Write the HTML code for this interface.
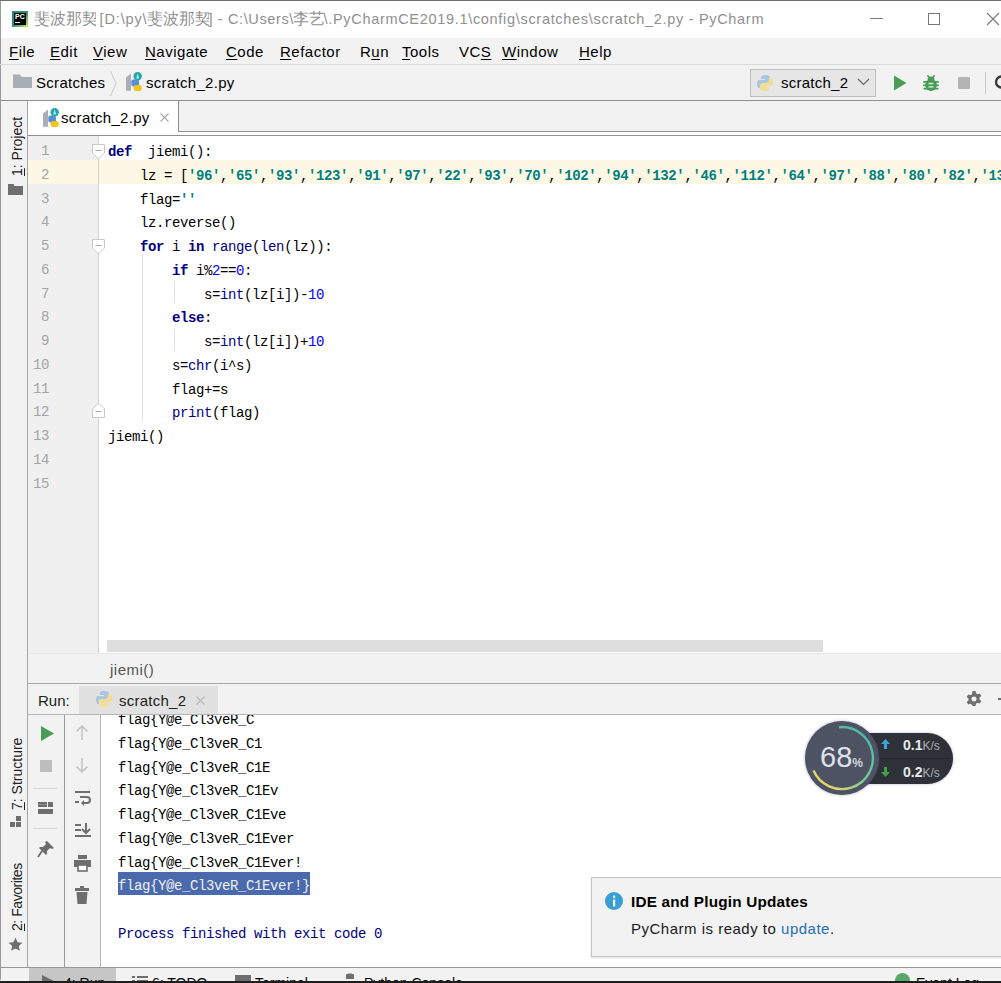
<!DOCTYPE html>
<html><head><meta charset="utf-8">
<style>
*{margin:0;padding:0;box-sizing:border-box}
html,body{width:1001px;height:983px;overflow:hidden;background:#f2f2f2;font-family:"Liberation Sans",sans-serif;position:relative}
.a{position:absolute}
.ui{font-family:"Liberation Sans",sans-serif;font-size:16px;color:#000;white-space:pre;line-height:1}
.mono{font-family:"Liberation Mono",monospace;font-size:14px;letter-spacing:-0.4px;white-space:pre;line-height:23.75px}
u{text-decoration:underline;text-decoration-thickness:1px;text-underline-offset:1.5px}
.kw{color:#000080;font-weight:bold}
.st{color:#008080;font-weight:bold}
.num{color:#0000ff}
.bi{color:#000080}
</style></head><body>
<!-- top dark line -->
<div class="a" style="left:0;top:0;width:1001px;height:1px;background:#6e6e6e"></div>
<!-- title bar -->
<div class="a" style="left:0;top:1px;width:1001px;height:37px;background:#fff"></div>
<div class="a" style="left:0;top:1px;width:1px;height:982px;background:#9a9a9a"></div>
<!-- PC logo -->
<div class="a" style="left:12px;top:11px;width:16px;height:16px;background:linear-gradient(135deg,#2e8a6a 0%,#2f8b80 50%,#d8e85a 100%)"></div>
<div class="a" style="left:14px;top:13px;width:12px;height:12px;background:#000"></div>
<div class="a" style="left:15px;top:13px;font:bold 7px 'Liberation Sans';color:#fff;line-height:8px">PC</div>
<div class="a" style="left:15px;top:22px;width:5px;height:1px;background:#fff"></div>
<div class="a ui" style="left:34px;top:11px;width:62px;overflow:hidden;color:#8f8f8f;font-size:15.5px">斐波那契</div>
<div class="a ui" style="left:99.5px;top:12px;color:#8f8f8f;font-size:14.5px;letter-spacing:0.87px">[D:\py\</div>
<div class="a ui" style="left:147px;top:11px;width:62px;overflow:hidden;color:#8f8f8f;font-size:15.5px">斐波那契</div>
<div class="a ui" style="left:208.5px;top:12px;color:#8f8f8f;font-size:14.5px;letter-spacing:0.63px">] - C:\Users\</div>
<div class="a ui" style="left:293px;top:11px;width:31px;overflow:hidden;color:#8f8f8f;font-size:15.5px">李艺</div>
<div class="a ui" style="left:323.5px;top:12px;color:#8f8f8f;font-size:14.5px;letter-spacing:0.69px">\.PyCharmCE2019.1\config\scratches\scratch_2.py - PyCharm</div>
<!-- window controls -->
<div class="a" style="left:870px;top:18px;width:13px;height:1px;background:#777"></div>
<div class="a" style="left:928px;top:13px;width:12px;height:12px;border:1px solid #777"></div>
<svg class="a" style="left:986px;top:12px" width="15" height="14"><path d="M1 1L13 13M13 1L1 13" stroke="#777" stroke-width="1.1" fill="none"/></svg>

<!-- menu bar -->
<div class="a" style="left:1px;top:38px;width:1000px;height:26px;background:#f2f2f2"></div>
<div class="a" style="left:0;top:64px;width:1001px;height:1px;background:#dadada"></div>
<div class="a ui" style="left:9px;top:44px;font-size:15px;letter-spacing:0.5px"><u>F</u>ile</div>
<div class="a ui" style="left:50px;top:44px;font-size:15px;letter-spacing:0.5px"><u>E</u>dit</div>
<div class="a ui" style="left:93px;top:44px;font-size:15px;letter-spacing:0.5px"><u>V</u>iew</div>
<div class="a ui" style="left:145px;top:44px;font-size:15px;letter-spacing:0.5px"><u>N</u>avigate</div>
<div class="a ui" style="left:226px;top:44px;font-size:15px;letter-spacing:0.5px"><u>C</u>ode</div>
<div class="a ui" style="left:280px;top:44px;font-size:15px;letter-spacing:0.5px"><u>R</u>efactor</div>
<div class="a ui" style="left:360px;top:44px;font-size:15px;letter-spacing:0.5px">R<u>u</u>n</div>
<div class="a ui" style="left:402px;top:44px;font-size:15px;letter-spacing:0.5px"><u>T</u>ools</div>
<div class="a ui" style="left:459px;top:44px;font-size:15px;letter-spacing:0.5px">VC<u>S</u></div>
<div class="a ui" style="left:502px;top:44px;font-size:15px;letter-spacing:0.5px"><u>W</u>indow</div>
<div class="a ui" style="left:579px;top:44px;font-size:15px;letter-spacing:0.5px"><u>H</u>elp</div>

<!-- nav bar content -->
<svg class="a" style="left:13px;top:74px" width="19" height="14"><path d="M0 1.5V14H19V3H8.5L7 0.5H0Z" fill="#a8aeb5"/></svg>
<div class="a ui" style="left:36px;top:75px;font-size:15px;letter-spacing:0.3px">Scratches</div>
<svg class="a" style="left:109px;top:70px" width="9" height="27"><path d="M1.5 1L7 13.5L1.5 26" stroke="#c8c8c8" stroke-width="1" fill="none"/></svg>
<svg class="a" style="left:125px;top:72px" width="19" height="19" viewBox="0 0 19 19"><path d="M1 5.5L6 1.5V18.8H1Z" fill="#a9aeb6"/><rect x="6.3" y="7.5" width="7.7" height="7" rx="2" fill="#5a8fd6"/><rect x="8.7" y="13" width="8" height="6" rx="2.5" fill="#f3c51c"/><circle cx="12.7" cy="4.2" r="4.2" fill="#2ba4a8"/><path d="M12.7 1.6L14.3 6.6H11.1Z" fill="#8ff3f0"/></svg>
<div class="a ui" style="left:146px;top:75px;font-size:15px;letter-spacing:0.3px">scratch_2.py</div>
<!-- run config combo -->
<div class="a" style="left:750px;top:69px;width:126px;height:28px;background:#e6e6e6;border:1px solid #bdbdbd"></div>
<svg class="a" style="left:756px;top:74px" width="18" height="18" viewBox="0 0 18 18"><path d="M9 1c-4 0-4 2-4 2v2h4v1H3S1 6 1 10s2 4 2 4h2v-2c0-2 2-3 3-3h4s2 0 2-2V3s0-2-5-2z" fill="#a9c6e4"/><path d="M9 17c4 0 4-2 4-2v-2H9v-1h6s2 0 2-4-2-4-2-4h-2v2c0 2-2 3-3 3H6s-2 0-2 2v4s0 2 5 2z" fill="#f3dd91"/></svg>
<div class="a ui" style="left:781px;top:75px;font-size:15px;letter-spacing:0.25px">scratch_2</div>
<svg class="a" style="left:857px;top:78px" width="13" height="8"><path d="M1 1L6.5 6.5L12 1" stroke="#666" stroke-width="1.2" fill="none"/></svg>
<svg class="a" style="left:893px;top:75px" width="14" height="16"><path d="M1 0.5L13.5 8L1 15.5Z" fill="#499c54"/></svg>
<svg class="a" style="left:922px;top:74px" width="18" height="18" viewBox="0 0 18 18"><g fill="#499c54"><path d="M5.5 1.2L7.2 3.6M12.5 1.2L10.8 3.6" stroke="#499c54" stroke-width="1.5"/><ellipse cx="9" cy="5" rx="3.4" ry="2.6"/><ellipse cx="9" cy="11" rx="5.8" ry="6"/><rect x="1" y="7" width="16" height="1.8" rx="0.9"/><rect x="1" y="10.4" width="16" height="1.8" rx="0.9"/><rect x="1.5" y="13.8" width="15" height="1.8" rx="0.9"/></g><rect x="6.5" y="8.8" width="5" height="1.5" fill="#cfe8cf"/><rect x="6.5" y="12.1" width="5" height="1.5" fill="#cfe8cf"/></svg>
<div class="a" style="left:958px;top:77px;width:12px;height:12px;background:#b4b4b4;border-radius:1px"></div>
<div class="a" style="left:985px;top:72px;width:1px;height:22px;background:#c8c8c8"></div>
<svg class="a" style="left:994px;top:75px" width="10" height="18"><circle cx="7.5" cy="7" r="5.5" stroke="#3a3a3a" stroke-width="2.4" fill="none"/></svg>
<!-- nav bar -->
<div class="a" style="left:0;top:100px;width:1001px;height:1px;background:#8f8f8f"></div>

<!-- left stripe -->
<div class="a" style="left:27px;top:101px;width:1px;height:866px;background:#a6a6a6"></div>

<!-- tab bar -->
<div class="a" style="left:28px;top:101px;width:973px;height:34px;background:#fff"></div>
<div class="a" style="left:178px;top:101px;width:823px;height:31px;background:#f2f2f2;border-left:1px solid #8f8f8f;border-bottom:1px solid #8f8f8f"></div>
<div class="a" style="left:28px;top:135px;width:973px;height:1px;background:#8f8f8f"></div>

<!-- editor -->
<div class="a" style="left:28px;top:136px;width:71px;height:518px;background:#f0f0f0"></div>
<div class="a" style="left:99px;top:136px;width:902px;height:518px;background:#fff"></div>
<div class="a" style="left:28px;top:160px;width:973px;height:24px;background:#fdf8e5"></div>
<div class="a" style="left:98px;top:136px;width:1px;height:518px;background:#d2d2d2"></div>


<!-- tab content -->
<svg class="a" style="left:42px;top:108px" width="19" height="19" viewBox="0 0 19 19"><path d="M1 5.5L6 1.5V18.8H1Z" fill="#a9aeb6"/><rect x="6.3" y="7.5" width="7.7" height="7" rx="2" fill="#5a8fd6"/><rect x="8.7" y="13" width="8" height="6" rx="2.5" fill="#f3c51c"/><circle cx="12.7" cy="4.2" r="4.2" fill="#2ba4a8"/><path d="M12.7 1.6L14.3 6.6H11.1Z" fill="#8ff3f0"/></svg>
<div class="a ui" style="left:61px;top:110px;font-size:15px;letter-spacing:0.3px">scratch_2.py</div>
<svg class="a" style="left:160px;top:113px" width="9" height="9"><path d="M0.5 0.5L8.5 8.5M8.5 0.5L0.5 8.5" stroke="#a8a8a8" stroke-width="1.1"/></svg>
<!-- indent guides -->
<div class="a" style="left:142px;top:254px;width:1px;height:168px;background:#e4e4e4"></div>
<div class="a" style="left:174px;top:281px;width:1px;height:22px;background:#e4e4e4"></div>
<div class="a" style="left:174px;top:329px;width:1px;height:22px;background:#e4e4e4"></div>
<!-- line numbers -->
<div class="a mono" style="left:28px;top:140px;width:21px;text-align:right;color:#a4a4a4">1
2
3
4
5
6
7
8
9
10
11
12
13
14
15</div>
<!-- fold markers -->
<svg class="a" style="left:92px;top:144px" width="13" height="16"><path d="M0.5 0.5H12.5V9L6.5 15L0.5 9Z" fill="#fff" stroke="#c8c8c8"/><path d="M3.5 6.5H9.5" stroke="#a8a8a8"/></svg>
<svg class="a" style="left:92px;top:239px" width="13" height="16"><path d="M0.5 0.5H12.5V9L6.5 15L0.5 9Z" fill="#fff" stroke="#c8c8c8"/><path d="M3.5 6.5H9.5" stroke="#a8a8a8"/></svg>
<svg class="a" style="left:92px;top:402px" width="13" height="16"><path d="M0.5 15.5H12.5V7L6.5 1L0.5 7Z" fill="#fff" stroke="#c8c8c8"/><path d="M3.5 9.5H9.5" stroke="#a8a8a8"/></svg>
<!-- code -->
<div class="a mono" style="left:108px;top:141px;color:#000"><span class="kw">def</span>  jiemi():
    lz = [<span class="st">'96'</span>,<span class="st">'65'</span>,<span class="st">'93'</span>,<span class="st">'123'</span>,<span class="st">'91'</span>,<span class="st">'97'</span>,<span class="st">'22'</span>,<span class="st">'93'</span>,<span class="st">'70'</span>,<span class="st">'102'</span>,<span class="st">'94'</span>,<span class="st">'132'</span>,<span class="st">'46'</span>,<span class="st">'112'</span>,<span class="st">'64'</span>,<span class="st">'97'</span>,<span class="st">'88'</span>,<span class="st">'80'</span>,<span class="st">'82'</span>,<span class="st">'137'</span>,<span class="st">'90'</span>]
    flag=<span class="st">''</span>
    lz.reverse()
    <span class="kw">for</span> i <span class="kw">in</span> <span class="bi">range</span>(<span class="bi">len</span>(lz)):
        <span class="kw">if</span> i%<span class="num">2</span>==<span class="num">0</span>:
            s=<span class="bi">int</span>(lz[i])-<span class="num">10</span>
        <span class="kw">else</span>:
            s=<span class="bi">int</span>(lz[i])+<span class="num">10</span>
        s=<span class="bi">chr</span>(i^s)
        flag+=s
        <span class="bi">print</span>(flag)
jiemi()</div>
<!-- h scrollbar -->
<div class="a" style="left:107px;top:640px;width:716px;height:12px;background:#dedede"></div>
<!-- breadcrumbs -->
<div class="a ui" style="left:110px;top:662px;color:#555;font-size:15px;letter-spacing:0.5px">jiemi()</div>
<!-- breadcrumb bar -->
<div class="a" style="left:28px;top:653px;width:973px;height:1px;background:#e8e8e8"></div>
<div class="a" style="left:28px;top:683px;width:973px;height:1px;background:#a9a9a9"></div>

<!-- run header -->
<div class="a" style="left:28px;top:714px;width:973px;height:1px;background:#b5b5b5"></div>
<!-- console -->
<div class="a" style="left:100px;top:715px;width:901px;height:252px;background:#fff"></div>
<div class="a" style="left:64px;top:715px;width:1px;height:252px;background:#9a9a9a"></div>
<div class="a" style="left:100px;top:715px;width:1px;height:252px;background:#b4b4b4"></div>

<!-- run header content -->
<div class="a" style="left:79px;top:686px;width:139px;height:28px;background:#e1e1e1"></div>
<div class="a ui" style="left:38px;top:693px;color:#222;font-size:15px">Run:</div>
<svg class="a" style="left:95px;top:690px" width="18" height="18" viewBox="0 0 18 18"><path d="M9 1c-4 0-4 2-4 2v2h4v1H3S1 6 1 10s2 4 2 4h2v-2c0-2 2-3 3-3h4s2 0 2-2V3s0-2-5-2z" fill="#a9c6e4"/><path d="M9 17c4 0 4-2 4-2v-2H9v-1h6s2 0 2-4-2-4-2-4h-2v2c0 2-2 3-3 3H6s-2 0-2 2v4s0 2 5 2z" fill="#f3dd91"/></svg>
<div class="a ui" style="left:119px;top:693px;color:#222;font-size:15px;letter-spacing:0.25px">scratch_2</div>
<svg class="a" style="left:196px;top:696px" width="9" height="9"><path d="M0.5 0.5L8.5 8.5M8.5 0.5L0.5 8.5" stroke="#b8b8b8" stroke-width="1.1"/></svg>
<svg class="a" style="left:966px;top:691px" width="16" height="16" viewBox="0 0 16 16"><path fill="#6e6e6e" fill-rule="evenodd" d="M6.5 0h3l.5 2.3 1.6.9 2.2-.8 1.5 2.6-1.8 1.6v1.8l1.8 1.6-1.5 2.6-2.2-.8-1.6.9-.5 2.3h-3L6 13.7l-1.6-.9-2.2.8L.7 11l1.8-1.6V7.6L.7 6l1.5-2.6 2.2.8L6 3.3zM8 5.5a2.5 2.5 0 1 0 0 5 2.5 2.5 0 1 0 0-5z"/></svg>
<div class="a" style="left:998px;top:698px;width:4px;height:2px;background:#6e6e6e"></div>
<!-- console text -->
<div class="a" style="left:118px;top:872px;width:192px;height:23px;background:#4a6aad"></div>
<div class="a" style="left:100px;top:715px;width:901px;height:252px;overflow:hidden">
<div class="a mono" style="left:18px;top:-6px;color:#000;line-height:23.78px">flag{Y@e_Cl3veR_C
flag{Y@e_Cl3veR_C1
flag{Y@e_Cl3veR_C1E
flag{Y@e_Cl3veR_C1Ev
flag{Y@e_Cl3veR_C1Eve
flag{Y@e_Cl3veR_C1Ever
flag{Y@e_Cl3veR_C1Ever!
<span style="color:#f0f0f0">flag{Y@e_Cl3veR_C1Ever!}</span>

<span style="color:#000080">Process finished with exit code 0</span></div>
</div>
<!-- console toolbar icons -->
<svg class="a" style="left:41px;top:726px" width="13" height="15"><path d="M0 0L13 7.5L0 15Z" fill="#499c54"/></svg>
<div class="a" style="left:40px;top:760px;width:12px;height:12px;background:#bdbdbd"></div>
<div class="a" style="left:33px;top:788px;width:24px;height:1px;background:#d6d6d6"></div>
<svg class="a" style="left:38px;top:802px" width="15" height="12"><g fill="#6e6e6e"><rect x="0" y="0" width="9" height="5"/><rect x="10" y="0" width="5" height="5"/><rect x="0" y="7" width="15" height="5"/></g><path d="M0 2.5H9" stroke="#9a9a9a" stroke-width="0.8"/></svg>
<div class="a" style="left:33px;top:828px;width:24px;height:1px;background:#d6d6d6"></div>
<svg class="a" style="left:37px;top:840px" width="18" height="18" viewBox="0 0 18 18"><path d="M10 1l7 7-2 1-2-1-3 3 0 3-1 1-7-7 1-1 3 0 3-3-1-2z" fill="#6e6e6e"/><path d="M5 11L1 17" stroke="#6e6e6e" stroke-width="1.8"/></svg>
<svg class="a" style="left:75px;top:725px" width="14" height="15"><path d="M7 1V15M1.5 6.5L7 1L12.5 6.5" stroke="#c4c4c4" stroke-width="1.6" fill="none"/></svg>
<svg class="a" style="left:75px;top:758px" width="14" height="15"><path d="M7 0V14M1.5 8.5L7 14L12.5 8.5" stroke="#c4c4c4" stroke-width="1.6" fill="none"/></svg>
<svg class="a" style="left:74px;top:790px" width="17" height="17" viewBox="0 0 17 17"><g fill="#6e6e6e"><rect x="1" y="1" width="15" height="2"/><rect x="6" y="6" width="6" height="2"/><rect x="1" y="11" width="4" height="2"/></g><path d="M10 7H13C15 7 16 8.5 16 10S15 13 13 13H8" stroke="#6e6e6e" stroke-width="2" fill="none"/><path d="M10 10L7 13L10 16Z" fill="#6e6e6e"/></svg>
<svg class="a" style="left:74px;top:823px" width="17" height="15" viewBox="0 0 17 15"><g fill="#6e6e6e"><rect x="1" y="1" width="6" height="2"/><rect x="1" y="6" width="6" height="2"/><rect x="1" y="12" width="16" height="2"/></g><path d="M12 0V9M8 6L12 10L16 6" stroke="#6e6e6e" stroke-width="2" fill="none"/></svg>
<svg class="a" style="left:74px;top:855px" width="17" height="17" viewBox="0 0 17 17"><g fill="#6e6e6e"><rect x="4" y="0" width="9" height="4"/><rect x="0" y="5" width="17" height="7"/></g><rect x="4" y="10" width="9" height="6" fill="#fff" stroke="#6e6e6e" stroke-width="1.6"/></svg>
<svg class="a" style="left:75px;top:886px" width="14" height="18" viewBox="0 0 14 18"><g fill="#6e6e6e"><rect x="5" y="0" width="4" height="2"/><rect x="0" y="2" width="14" height="3"/><path d="M1.5 6H12.5L11.5 18H2.5Z"/></g></svg>
<!-- bottom -->
<div class="a" style="left:0;top:967px;width:1001px;height:1px;background:#979797"></div>
<div class="a" style="left:0;top:980px;width:1001px;height:1px;background:#f7f7f7"></div><div class="a" style="left:0;top:981px;width:1001px;height:2px;background:#1e1e1e"></div>
<!-- left stripe labels -->
<div class="a ui" style="left:9.5px;top:176px;font-size:14px;color:#222;transform:rotate(-90deg);transform-origin:0 0;"><u>1</u>: Project</div>
<svg class="a" style="left:8px;top:183px" width="15" height="12"><path d="M0 1V12H15V3H6.5L5.5 1Z" fill="#6e6e6e"/></svg>
<div class="a ui" style="left:9.5px;top:810px;font-size:14px;color:#222;transform:rotate(-90deg);transform-origin:0 0;"><u>7</u>: Structure</div>
<svg class="a" style="left:10px;top:816px" width="12" height="11"><g fill="#6e6e6e"><rect x="6" y="0" width="5" height="5"/><rect x="0" y="6" width="5" height="5"/><rect x="6" y="6" width="5" height="5"/></g></svg>
<div class="a ui" style="left:9.5px;top:931px;font-size:14px;letter-spacing:-0.45px;color:#222;transform:rotate(-90deg);transform-origin:0 0;"><u>2</u>: Favorites</div>
<svg class="a" style="left:8px;top:937px" width="15" height="15" viewBox="0 0 24 24"><path d="M12 1l3.4 7.2 7.6.9-5.6 5.3 1.5 7.6L12 18.2 5.1 22l1.5-7.6L1 9.1l7.6-.9z" fill="#6e6e6e"/></svg>
<!-- bottom strip -->
<div class="a" style="left:29px;top:968px;width:87px;height:13px;background:#c6c6c6"></div>
<div class="a" style="left:0;top:968px;width:1001px;height:13px;overflow:hidden">
<svg class="a" style="left:42px;top:7px" width="12" height="12"><path d="M0 0L12 6L0 12Z" fill="#6e6e6e"/></svg>
<div class="a ui" style="left:64px;top:8px;font-size:14px"><u>4</u>: Run</div>
<svg class="a" style="left:132px;top:8px" width="16" height="12"><g fill="#6e6e6e"><rect x="0" y="0" width="3" height="2"/><rect x="5" y="0" width="11" height="2"/><rect x="0" y="4" width="3" height="2"/><rect x="5" y="4" width="11" height="2"/></g></svg>
<div class="a ui" style="left:152px;top:8px;font-size:14px"><u>6</u>: TODO</div>
<div class="a" style="left:235px;top:7px;width:16px;height:12px;background:#6e6e6e"></div>
<div class="a ui" style="left:255px;top:8px;font-size:14px">Terminal</div>
<svg class="a" style="left:342px;top:5px" width="16" height="12"><path d="M4 2c0-2 8-2 8 0v4H4z" fill="#6e6e6e"/></svg>
<div class="a ui" style="left:364px;top:8px;font-size:14px">Python Console</div>
<div class="a" style="left:895px;top:5px;width:15px;height:15px;border-radius:50%;background:#59a869"></div>
<div class="a ui" style="left:916px;top:8px;font-size:14px">Event Log</div>
</div>
<!-- notification -->
<div class="a" style="left:591px;top:877px;width:420px;height:80px;background:#f2f2f2;border:1px solid #c4c4c4;box-shadow:0 1px 2px rgba(0,0,0,0.12)"></div>
<svg class="a" style="left:605px;top:892px" width="18" height="18" viewBox="0 0 18 18"><circle cx="9" cy="9" r="9" fill="#389fd6"/><rect x="8" y="7.5" width="2.2" height="7" fill="#fff"/><rect x="8" y="3.6" width="2.2" height="2.2" fill="#fff"/></svg>
<div class="a ui" style="left:631px;top:894px;font-weight:bold;font-size:15.3px;letter-spacing:0.2px;color:#000">IDE and Plugin Updates</div>
<div class="a ui" style="left:631px;top:921px;font-size:15px;letter-spacing:0.5px;color:#1a1a1a">PyCharm is ready to <span style="color:#2470b3">update</span>.</div>
<!-- network widget -->
<div class="a" style="left:842px;top:733px;width:111px;height:51px;border-radius:26px;background:#2f3138;box-shadow:0 0 3px rgba(80,80,120,0.4)"></div>
<div class="a" style="left:880px;top:758px;width:70px;height:1px;background:#24262b"></div>
<div class="a" style="left:805px;top:721px;width:74px;height:74px;border-radius:50%;background:#4e5364;box-shadow:0 0 3px rgba(60,60,130,0.45)"></div>
<svg class="a" style="left:805px;top:721px" width="74" height="74" viewBox="0 0 74 74"><defs><linearGradient id="rg" x1="0.8" y1="0.1" x2="0.2" y2="0.9"><stop offset="0" stop-color="#4cb8a6"/><stop offset="0.55" stop-color="#7cc79a"/><stop offset="1" stop-color="#e0d66c"/></linearGradient></defs><path d="M34 6.2A31 31 0 1 1 8.5 49.5" stroke="url(#rg)" stroke-width="2.4" fill="none"/></svg>
<div class="a" style="left:820px;top:743px;font:29px 'Liberation Sans';color:#dde1e8;letter-spacing:0px;line-height:1;-webkit-text-stroke:0px">68<span style="font-size:12px;font-weight:bold;color:#cfd3da">%</span></div>
<svg class="a" style="left:881px;top:739px" width="9" height="10"><path d="M4.5 0L9 5H6V10H3V5H0Z" fill="#3aa8e0"/></svg>
<svg class="a" style="left:881px;top:767px" width="9" height="10"><path d="M4.5 10L9 5H6V0H3V5H0Z" fill="#43a047"/></svg>
<div class="a" style="left:903px;top:738px;font:bold 14px 'Liberation Sans';color:#e6e8ec;line-height:1">0.1<span style="font-weight:normal;font-size:12px;color:#a9adb6">K/s</span></div>
<div class="a" style="left:903px;top:765px;font:bold 14px 'Liberation Sans';color:#e6e8ec;line-height:1">0.2<span style="font-weight:normal;font-size:12px;color:#a9adb6">K/s</span></div>
</body></html>
